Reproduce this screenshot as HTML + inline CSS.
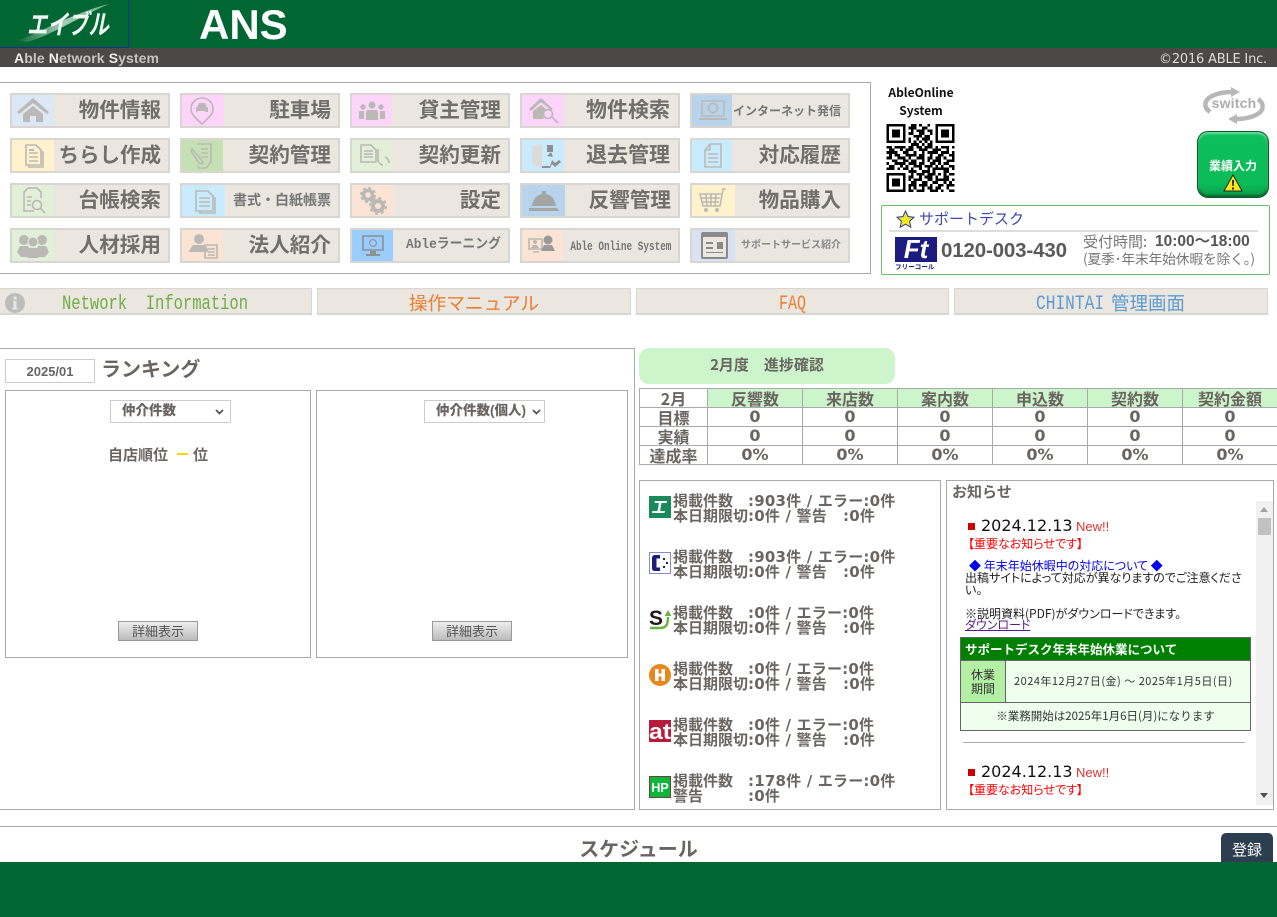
<!DOCTYPE html>
<html lang="ja"><head><meta charset="utf-8"><title>ANS</title>
<style>
html,body{margin:0;padding:0;background:#fff}
body{position:relative;width:1277px;height:917px;overflow:hidden;font-family:"Liberation Sans","Noto Sans CJK JP",sans-serif;color:#6b6562}
div,span,svg,a{position:absolute;white-space:nowrap}
.b{width:160px;height:35px;box-sizing:border-box;background:#ebe6df;border:2px solid #d9d6d1}
.b i{position:absolute;left:0;top:0;bottom:0;display:block}
.b span{right:7px;top:1px;line-height:30px;font-size:20.6px;font-weight:700;color:#716e6b}
.b span.sm{font-size:14px;color:#777;top:0}
.b span.xs{font-size:10px;color:#888}
.b svg{left:5px;top:3px;fill:#bbb9b5;stroke:none}
.s{fill:none;stroke:#bbb9b5;stroke-width:1.6}
.n{top:288px;height:27px;box-sizing:border-box;background:#ebe6df;border:1px solid #d9d6d1;border-bottom:2px solid #d9d6d1;text-align:center;line-height:29px;font-size:18.7px}
.c{font-family:"Liberation Mono",monospace;font-size:20px;line-height:30px;top:290px}
.box{box-sizing:border-box;border:1px solid #aaa;background:#fff}
.sel{box-sizing:border-box;width:121px;height:23px;border:1px solid #ccc;background:#fff;top:9px;font-size:13.5px;font-weight:700;line-height:20px;color:#6b6562}
.sel b{position:absolute;left:11px}
.sel svg{right:6px;top:8px}
.btn{box-sizing:border-box;width:80px;height:20px;top:230px;border:1px solid #999;background:linear-gradient(#eee,#bbb);text-align:center;font-size:13px;line-height:19px;color:#555}
table{position:absolute;left:639px;top:388px;border-collapse:collapse;table-layout:fixed;width:638px}
td,th{border:1px solid #aaa;height:18px;padding:0;text-align:center;font:700 16px/18px "DejaVu Sans","Noto Sans CJK JP",sans-serif;color:#6b6562;box-sizing:border-box}
th{background:#ccf5cc;font-size:16px;font-family:"Noto Sans CJK JP",sans-serif}
.l{font-size:16px;font-family:"Noto Sans CJK JP",sans-serif}
.p{font:700 15px/15px "DejaVu Sans","Noto Sans CJK JP",sans-serif;color:#6b6562}
.p span{top:0}
.p span+span{letter-spacing:.2px}
.nw{font:12px/14px "Noto Sans CJK JP",sans-serif;color:#222;font-feature-settings:"palt"}
.dt{font:16px/18px "DejaVu Sans",sans-serif;color:#111}
.red{color:#e00;font:12px/14px "Liberation Sans","Noto Sans CJK JP",sans-serif;font-feature-settings:"palt"}
</style></head><body>

<!-- header -->
<div style="left:0;top:0;width:1277px;height:48px;background:#006633"></div>
<div style="left:128px;top:0;width:1px;height:48px;background:#1c2f8a"></div>
<div style="left:0;top:47px;width:128px;height:1px;background:#1c2f8a"></div>
<svg style="left:15px;top:2px" width="100" height="42" viewBox="0 0 100 42">
<defs><linearGradient id="g1" x1="0" x2="1"><stop offset="0" stop-color="#006633"/><stop offset=".5" stop-color="#cfe6d8"/><stop offset="1" stop-color="#8fc4a5"/></linearGradient></defs>
<path d="M1 39C20 33 60 10 94 2 70 12 35 34 12 40z" fill="url(#g1)" opacity=".8"/>
<text x="12" y="32" font-family="Noto Sans CJK JP" font-weight="700" font-style="italic" font-size="27" fill="#f2f7f3" textLength="82" lengthAdjust="spacingAndGlyphs">エイブル</text>
</svg>
<div style="left:199px;top:1px;font:700 42px/48px 'Liberation Sans',sans-serif;color:#fff">ANS</div>
<div style="left:0;top:48px;width:1277px;height:19px;background:#4b4946"></div>
<div style="left:14px;top:50px;font:700 14px/16px 'Liberation Sans',sans-serif;color:#c4c4c4;letter-spacing:.1px"><b style="color:#eee">A</b>ble <b style="color:#eee">N</b>etwork <b style="color:#eee">S</b>ystem</div>
<div style="right:10px;top:52px;font:13px/16px 'DejaVu Sans',sans-serif;color:#ddd;letter-spacing:-.2px">©2016 ABLE Inc.</div>

<!-- menu frame -->
<div class="box" style="left:-1px;top:82px;width:872px;height:192px"></div>

<!-- row 1 -->
<div class="b" style="left:10px;top:93px"><i style="width:42px;background:#dce8f5"></i><svg width="32" height="25" viewBox="0 0 32 25" style="left:5px;top:3px"><path d="M16 0L0 14l2 2L16 5l14 11 2-2zM6 16L16 8l10 8v8h-7v-6h-6v6H6z"/></svg><span>物件情報</span></div>
<div class="b" style="left:180px;top:93px"><i style="width:42px;background:#fdd5fb"></i><svg width="30" height="28" viewBox="0 0 30 28" style="left:7px;top:2px"><path class="s" d="M13 1a11 11 0 0 0-11 11c0 6 6 10 11 15 5-5 11-9 11-15A11 11 0 0 0 13 1z"/><path d="M8 10l2-4h6l2 4 1 1v4h-3v-1h-8v1H7v-4z"/></svg><span>駐車場</span></div>
<div class="b" style="left:350px;top:93px"><i style="width:40px;background:#fdd5fb"></i><svg width="28" height="20" viewBox="0 0 28 20" style="left:6px;top:6px"><circle cx="14" cy="4" r="3.5"/><circle cx="5" cy="6" r="2.7"/><circle cx="23" cy="6" r="2.7"/><path d="M9 9h10l1 3v7H8v-7zM1 10h5v8H1zM22 10h5v8h-5z"/></svg><span>貸主管理</span></div>
<div class="b" style="left:520px;top:93px"><i style="width:42px;background:#fdd5fb"></i><svg width="32" height="28" viewBox="0 0 32 28" style="left:7px;top:2px"><path d="M12 1L0 12l2 2L12 5l10 8 2-1zM4 14l8-6 6 5a7 7 0 0 0-3 9H4z"/><circle class="s" cx="19" cy="17" r="4.5" stroke-width="2"/><path class="s" stroke-width="2.4" d="M23 20l6 6"/></svg><span style="right:8px;font-size:21px">物件検索</span></div>
<div class="b" style="left:690px;top:93px"><i style="width:40px;background:#b8d3ec"></i><svg width="32" height="24" viewBox="0 0 32 24" style="left:6px;top:4px"><path class="s" d="M4 2h22v15H4z"/><circle class="s" cx="15" cy="9" r="4.5"/><path d="M1 19h28v2H1z"/></svg><span class="xs" style="right:7px;font-size:12px;color:#777;font-weight:700">インターネット発信</span></div>

<!-- row 2 -->
<div class="b" style="left:10px;top:138px"><i style="width:42px;background:#fff2cc"></i><svg width="24" height="26" viewBox="0 0 24 26" style="left:9px;top:3px"><path class="s" d="M5 2h10l5 5v15H5zM20 9h2v15H8v-2M8 10h9M8 14h9M8 18h9"/><path d="M8 6h5v2H8z"/></svg><span style="font-size:20.5px">ちらし作成</span></div>
<div class="b" style="left:180px;top:138px"><i style="width:41px;background:#c5e0b3"></i><svg width="26" height="26" viewBox="0 0 26 26" style="left:8px;top:3px"><path class="s" d="M7 1h14v18l-5 6H9l-2-2M11 6h7M11 10h7M11 14h7M2 6l11 13-1 2-3-1L1 8z"/></svg><span>契約管理</span></div>
<div class="b" style="left:350px;top:138px"><i style="width:40px;background:#e2efd9"></i><svg width="34" height="26" viewBox="0 0 34 26" style="left:7px;top:3px"><path class="s" d="M2 2h10l5 5v12H2zM5 8h9M5 11h9M5 14h9M19 6v12M24 22a6 6 0 0 1-5-5M26 14a6 6 0 0 1 4 6"/></svg><span>契約更新</span></div>
<div class="b" style="left:520px;top:138px"><i style="width:42px;background:#c9ebff"></i><svg width="30" height="28" viewBox="0 0 30 28" style="left:9px;top:2px"><path d="M1 4l10-2v24L1 22z" fill="#dcdbd8"/><path d="M16 3h6v7h-6zM11 26v-2h8l2-6 3 3 4-3 2 2-6 5-3-3-2 4zM20 10l2 5-6-1z" fill="#8f8f8f"/></svg><span style="right:8px;font-size:21px">退去管理</span></div>
<div class="b" style="left:690px;top:138px"><i style="width:40px;background:#c9ebff"></i><svg width="24" height="26" viewBox="0 0 24 26" style="left:10px;top:3px"><path class="s" d="M8 1h11v23H3V7zM3 7h5V1M6 11h10M6 15h10M6 19h10"/></svg><span>対応履歴</span></div>

<!-- row 3 -->
<div class="b" style="left:10px;top:183px"><i style="width:42px;background:#e2efd9"></i><svg width="26" height="28" viewBox="0 0 26 28" style="left:10px;top:2px"><path class="s" d="M6 1h9l4 4v6M6 1L2 5v19h10M5 10h5M5 14h4M5 18h4"/><circle class="s" cx="15" cy="18" r="4.5"/><path class="s" stroke-width="2.2" d="M18 21l5 5"/></svg><span>台帳検索</span></div>
<div class="b" style="left:180px;top:183px"><i style="width:43px;background:#c9ebff"></i><svg width="26" height="26" viewBox="0 0 26 26" style="left:11px;top:4px"><path class="s" d="M3 2h12l5 5v15H3zM20 9h2v15H7v-2M6 9h11M6 13h11M6 17h11"/></svg><span class="sm">書式・白紙帳票</span></div>
<div class="b" style="left:350px;top:183px"><i style="width:41px;background:#fbe4d5"></i><svg width="28" height="28" viewBox="0 0 28 28" style="left:7px;top:2px"><circle cx="9" cy="8" r="4.5" fill="none" stroke="#bbb9b5" stroke-width="3.5"/><circle cx="9" cy="8" r="7" fill="none" stroke="#bbb9b5" stroke-width="2" stroke-dasharray="3 2.5"/><circle cx="19" cy="19" r="5" fill="none" stroke="#bbb9b5" stroke-width="4"/><circle cx="19" cy="19" r="8" fill="none" stroke="#bbb9b5" stroke-width="2" stroke-dasharray="3 3.3"/></svg><span>設定</span></div>
<div class="b" style="left:520px;top:183px"><i style="width:43px;background:#b8d3ec"></i><svg width="30" height="22" viewBox="0 0 30 22" style="left:7px;top:6px"><path d="M13 0h4v3h-4zM15 3c7 0 11 5 12 12H3C4 8 8 3 15 3zM0 17h28l2 3H0z" fill="#a5a5a3"/></svg><span>反響管理</span></div>
<div class="b" style="left:690px;top:183px"><i style="width:43px;background:#fff2cc"></i><svg width="30" height="26" viewBox="0 0 30 26" style="left:6px;top:3px"><path class="s" d="M28 1h-3l-3 17H5L2 6h21M3 10h19M4 14h17M8 6l1 12M13 6v12M18 6l-1 12"/><circle cx="8" cy="22" r="2"/><circle cx="19" cy="22" r="2"/></svg><span>物品購入</span></div>

<!-- row 4 -->
<div class="b" style="left:10px;top:228px"><i style="width:42px;background:#e2efd9"></i><svg width="32" height="24" viewBox="0 0 32 24" style="left:5px;top:4px"><circle cx="7" cy="6" r="5"/><circle cx="25" cy="6" r="5"/><path d="M0 18l3-6h8l3 6-4 5H4zM18 18l3-6h8l3 6-4 5h-6z"/><circle cx="16" cy="8" r="5" stroke="#e2efd9"/><path d="M8 21l3-7h10l3 7-3 3H11z"/></svg><span>人材採用</span></div>
<div class="b" style="left:180px;top:228px"><i style="width:41px;background:#fbe4d5"></i><svg width="30" height="26" viewBox="0 0 30 26" style="left:6px;top:3px"><circle cx="11" cy="6" r="5"/><path d="M1 18l4-6h12l3 4v3H1z"/><path class="s" d="M17 12h12v13H17zM20 16h7M20 19h7M20 22h7"/></svg><span>法人紹介</span></div>
<div class="b" style="left:350px;top:228px"><i style="width:41px;background:#9cf"></i><svg width="26" height="24" viewBox="0 0 26 24" style="left:8px;top:5px"><path fill="none" stroke="#8f8f8f" stroke-width="1.6" d="M3 1h20v14H3z"/><circle cx="13" cy="8" r="3.4" fill="none" stroke="#8f8f8f"/><path d="M10 16h6v3h4v2H6v-2h4z" fill="#8f8f8f"/></svg><span class="sm" style="font-family:'Liberation Mono','Noto Sans CJK JP',monospace;font-size:13.5px;right:7px;top:1px;transform:scaleX(.95);transform-origin:right">Ableラーニング</span></div>
<div class="b" style="left:520px;top:228px"><i style="width:41px;background:#fbe4d5"></i><svg width="30" height="24" viewBox="0 0 30 24" style="left:5px;top:4px"><path class="s" d="M2 5h13v10H2zM6 18h6"/><circle cx="8" cy="8" r="2"/><path d="M4 14l2-3h4l2 3z"/><circle cx="21" cy="6" r="4.5" fill="#999"/><path d="M14 17l3-6h8l3 6zM14 9h2M26 9h2" fill="#999"/></svg><span class="sm" style="font-family:'Liberation Mono',monospace;font-size:13px;right:7px;top:2px;transform:scaleX(.72);transform-origin:right;font-weight:700">Able Online System</span></div>
<div class="b" style="left:690px;top:228px"><i style="width:43px;background:#d9e2f3"></i><svg width="30" height="28" viewBox="0 0 30 28" style="left:8px;top:1px"><path d="M3 1h23a2 2 0 0 1 2 2v23a2 2 0 0 1-2 2H3a2 2 0 0 1-2-2V3a2 2 0 0 1 2-2z" fill="#8a8a8a"/><path d="M3 6h23v20H3z" fill="#ebe6df"/><path d="M6 11h7v2H6zM6 16h7v2H6zM17 11h6v7h-6zM6 21h17v1H6z" fill="#8a8a8a"/></svg><span class="xs">サポートサービス紹介</span></div>

<!-- QR -->
<div style="left:871px;width:100px;top:84px;text-align:center;color:#111;font:700 12px/18px 'Noto Sans CJK JP',sans-serif;white-space:normal">AbleOnline<br>System</div>
<svg style="left:886px;top:124px" width="69" height="68" viewBox="0 0 25 25" shape-rendering="crispEdges"><path fill="none" stroke="#000" d="M0 .5h7M9 .5h2M12 .5h1M15 .5h1M18 .5h7M0 1.500h1M6 1.500h1M8 1.500h3M13 1.500h2M18 1.500h1M24 1.500h1M0 2.500h1M2 2.500h3M6 2.500h1M9 2.500h1M11 2.500h3M15 2.500h2M18 2.500h1M20 2.500h3M24 2.500h1M0 3.500h1M2 3.500h3M6 3.500h1M8 3.500h2M12 3.500h2M16 3.500h1M18 3.500h1M20 3.500h3M24 3.500h1M0 4.500h1M2 4.500h3M6 4.500h1M10 4.500h3M14 4.500h2M18 4.500h1M20 4.500h3M24 4.500h1M0 5.500h1M6 5.500h1M8 5.500h1M11 5.500h1M13 5.500h3M18 5.500h1M24 5.500h1M0 6.500h7M8 6.500h1M10 6.500h1M12 6.500h1M14 6.500h1M16 6.500h1M18 6.500h7M9 7.500h3M13 7.500h1M15 7.500h2M0 8.500h2M3 8.500h4M8 8.500h2M11 8.500h2M14 8.500h3M18 8.500h1M20 8.500h3M24 8.500h1M1 9.500h2M5 9.500h1M7 9.500h3M12 9.500h3M17 9.500h3M22 9.500h1M0 10.500h4M6 10.500h2M10 10.500h1M13 10.500h1M15 10.500h4M20 10.500h3M24 10.500h1M1 11.500h1M3 11.500h2M7 11.500h4M12 11.500h2M16 11.500h1M19 11.500h2M23 11.500h2M0 12.500h2M4 12.500h3M8 12.500h1M11 12.500h3M15 12.500h2M18 12.500h2M21 12.500h1M24 12.500h1M2 13.500h2M6 13.500h2M9 13.500h2M13 13.500h1M15 13.500h1M17 13.500h3M22 13.500h3M0 14.500h1M3 14.500h4M8 14.500h3M12 14.500h2M16 14.500h2M19 14.500h1M21 14.500h2M1 15.500h2M5 15.500h1M7 15.500h1M10 15.500h3M14 15.500h3M18 15.500h1M20 15.500h1M23 15.500h2M0 16.500h3M4 16.500h1M6 16.500h2M9 16.500h1M12 16.500h1M15 16.500h1M17 16.500h6M24 16.500h1M8 17.500h3M13 17.500h3M17 17.500h1M21 17.500h2M0 18.500h7M9 18.500h1M11 18.500h3M15 18.500h3M19 18.500h1M21 18.500h1M23 18.500h2M0 19.500h1M6 19.500h1M8 19.500h2M12 19.500h1M14 19.500h3M18 19.500h1M21 19.500h2M0 20.500h1M2 20.500h3M6 20.500h1M8 20.500h1M10 20.500h3M15 20.500h2M18 20.500h5M24 20.500h1M0 21.500h1M2 21.500h3M6 21.500h1M9 21.500h2M13 21.500h2M17 21.500h2M21 21.500h1M23 21.500h1M0 22.500h1M2 22.500h3M6 22.500h1M8 22.500h3M12 22.500h3M16 22.500h1M19 22.500h2M22 22.500h3M0 23.500h1M6 23.500h1M8 23.500h1M10 23.500h1M13 23.500h1M15 23.500h2M18 23.500h2M22 23.500h1M0 24.500h7M8 24.500h2M11 24.500h3M16 24.500h3M20 24.500h1M23 24.500h2"/></svg>

<!-- switch -->
<svg style="left:1202px;top:87px" width="64" height="37" viewBox="0 0 64 37"><path d="M8 25C1 20 2 13 10 9 16 6 24 5 30 5" fill="none" stroke="#b7b7b7" stroke-width="4.500"/><path d="M29 0l9 5-9 5zM35 27l-9 5 9 5z" fill="#b7b7b7"/><path d="M56 12c7 5 6 12-2 16-6 3-14 4-20 4" fill="none" stroke="#b7b7b7" stroke-width="4.500"/><text x="32" y="21" text-anchor="middle" font-family="Liberation Sans" font-weight="700" font-size="14" fill="#adadad" letter-spacing=".2">switch</text></svg>

<!-- green button -->
<div style="left:1197px;top:131px;width:72px;height:67px;box-sizing:border-box;border-radius:11px;background:linear-gradient(#0cc05c 0,#0bbb58 80%,#0a9c49 100%);border:1px solid #0a5c2c;box-shadow:inset 0 2px 2px #6fdc9c,inset 0 -2px 2px #06622c"></div>
<div style="left:1197px;width:72px;top:158px;text-align:center;font:700 12px/16px 'Noto Sans CJK JP',sans-serif;color:#fff">業績入力</div>
<svg style="left:1223px;top:174px" width="20" height="18" viewBox="0 0 20 18"><path d="M10 1l9 16H1z" fill="#ffe91a" stroke="#222"/><path d="M9 6h2l-.3 6h-1.400zM9 13.500h2v2H9z" fill="#222"/></svg>

<!-- support -->
<div style="left:881px;top:205px;width:389px;height:70px;box-sizing:border-box;border:1px solid #6dbb73;border-radius:2px;background:#fff"></div>
<svg style="left:896px;top:210px" width="19" height="18" viewBox="0 0 19 18"><path d="M9.500 1l2.500 5.500 6 .7-4.400 4 1.200 6-5.300-3-5.300 3 1.200-6L1 7.200l6-.7z" fill="#f2e925" stroke="#2b3a9c"/></svg>
<div style="left:919px;top:208px;font:15px/22px 'Noto Sans CJK JP',sans-serif;color:#3a4ab0">サポートデスク</div>
<div style="left:889px;top:230px;width:369px;height:2px;background:#ddd"></div>
<div style="left:895px;top:237px;width:42px;height:25px;background:#1c1c80;color:#fff;font:italic 700 26px/25px 'Liberation Sans',sans-serif;text-align:center">Ft</div>
<div style="left:895px;top:262px;font:700 6.5px/9px 'Noto Sans CJK JP',sans-serif;color:#1c1c80;letter-spacing:.1px">フリーコール</div>
<div style="left:941px;top:237px;font:700 20.500px/28px 'Liberation Sans',sans-serif;color:#5a5a5a;letter-spacing:-.15px">0120-003-430</div>
<div style="left:1083px;top:233px;font:15px/18px 'Noto Sans CJK JP',sans-serif;color:#777">受付時間:</div>
<div style="left:1155px;top:233px;font:700 15.500px/18px 'Liberation Sans','Noto Sans CJK JP',sans-serif;color:#555">10:00〜18:00</div>
<div style="left:1083px;top:249px;font:13.800px/18px 'Noto Sans CJK JP',sans-serif;color:#777;letter-spacing:-.2px">(夏季･年末年始休暇を除く。)</div>

<!-- nav -->
<div class="n" style="left:-1px;width:313px"></div>
<div class="c" style="left:62px;color:#70ad47;white-space:pre;transform:scaleX(.775);transform-origin:left">Network  Information</div>
<svg style="left:5px;top:293px" width="20" height="20" viewBox="0 0 20 20"><circle cx="10" cy="10" r="10" fill="#bdbdbd"/><path d="M8.500 3.500h3v3h-3zM8 8h3.500v7h1.500v1.500H7V15h1.500V9.500H8z" fill="#ebe6df"/></svg>
<div class="n" style="left:317px;width:314px;color:#ed7d31">操作マニュアル</div>
<div class="n" style="left:636px;width:313px"></div>
<div class="c" style="left:779px;color:#ed7d31;transform:scaleX(.75);transform-origin:left">FAQ</div>
<div class="n" style="left:954px;width:314px"></div>
<div class="c" style="left:1036px;color:#5b9bd5;transform:scaleX(.81);transform-origin:left">CHINTAI</div>
<div style="left:1111px;top:288px;font:18.500px/30px 'Noto Sans CJK JP',sans-serif;color:#5b9bd5">管理画面</div>

<!-- ranking -->
<div class="box" style="left:-1px;top:348px;width:636px;height:462px"></div>
<div class="box" style="left:5px;top:359px;width:90px;height:24px;border-color:#ccc;text-align:center;font:700 13px/23px 'Liberation Sans',sans-serif;color:#666">2025/01</div>
<div style="left:101px;top:354px;font:700 20px/28px 'Noto Sans CJK JP',sans-serif;color:#6b6562">ランキング</div>

<div class="box" style="left:5px;top:390px;width:306px;height:268px">
 <div class="sel" style="left:104px"><b>仲介件数</b><svg width="9" height="6" viewBox="0 0 9 6"><path d="M1 1l3.500 3.500L8 1" fill="none" stroke="#555" stroke-width="1.800"/></svg></div>
 <div style="left:102px;top:54px;font:700 15px/20px 'Noto Sans CJK JP',sans-serif;color:#6b6562">自店順位</div>
 <div style="left:171px;top:62px;width:11px;height:2px;background:#ffd500"></div>
 <div style="left:187px;top:54px;font:700 15px/20px 'Noto Sans CJK JP',sans-serif;color:#6b6562">位</div>
 <div class="btn" style="left:112px">詳細表示</div>
</div>
<div class="box" style="left:316px;top:390px;width:312px;height:268px">
 <div class="sel" style="left:107px"><b>仲介件数(個人)</b><svg width="9" height="6" viewBox="0 0 9 6" style="right:3px"><path d="M1 1l3.500 3.500L8 1" fill="none" stroke="#555" stroke-width="1.800"/></svg></div>
 <div class="btn" style="left:115px">詳細表示</div>
</div>

<!-- progress -->
<div style="left:639px;top:348px;width:256px;height:36px;background:#ccf5cc;border-radius:10px;text-align:center;font:700 15px/34px 'Noto Sans CJK JP',sans-serif;color:#6b6562;white-space:pre">2月度　進捗確認</div>
<table>
<colgroup><col style="width:68px"><col style="width:95px"><col style="width:95px"><col style="width:95px"><col style="width:95px"><col style="width:95px"><col style="width:95px"></colgroup>
<tr style="height:19px"><td class="l" style="font-family:'Noto Sans CJK JP',sans-serif">2月</td><th>反響数</th><th>来店数</th><th>案内数</th><th>申込数</th><th>契約数</th><th>契約金額</th></tr>
<tr style="height:19px"><td class="l">目標</td><td>0</td><td>0</td><td>0</td><td>0</td><td>0</td><td>0</td></tr>
<tr style="height:19px"><td class="l">実績</td><td>0</td><td>0</td><td>0</td><td>0</td><td>0</td><td>0</td></tr>
<tr style="height:19px"><td class="l">達成率</td><td>0%</td><td>0%</td><td>0%</td><td>0%</td><td>0%</td><td>0%</td></tr>
</table>

<!-- portals -->
<div class="box" style="left:639px;top:480px;width:302px;height:330px"></div>

<svg style="left:649px;top:496px" width="22" height="22" viewBox="0 0 22 22"><path d="M0 0h22v22H0z" fill="#1b8a5a"/><path d="M6 5h12l-.5 2h-5l-1.500 8h5l-.5 2H3l.5-2h5L10 7H5.500z" fill="#fff"/></svg>
<div class="p" style="left:673px;top:494px"><span style="left:0">掲載件数</span><span style="left:75px">:903件 / エラー:0件</span></div>
<div class="p" style="left:673px;top:509px"><span style="left:0">本日期限切</span><span style="left:75px">:0件 / 警告</span><span style="left:170px">:0件</span></div>

<svg style="left:649px;top:552px" width="22" height="22" viewBox="0 0 22 22"><path d="M.5.5h21v21H.5z" fill="#fff" stroke="#8a8acb"/><path d="M3 6q0-3 3-3h5v3.500H7.500v9H11V19H6q-3 0-3-3z" fill="#1c1c80"/><path d="M14 6h2v2h-2zM17 10h2v2h-2zM14 14h2v2h-2z" fill="#1c1c80"/></svg>
<div class="p" style="left:673px;top:550px"><span style="left:0">掲載件数</span><span style="left:75px">:903件 / エラー:0件</span></div>
<div class="p" style="left:673px;top:565px"><span style="left:0">本日期限切</span><span style="left:75px">:0件 / 警告</span><span style="left:170px">:0件</span></div>

<svg style="left:649px;top:608px" width="22" height="22" viewBox="0 0 22 22"><text x="0" y="17" font-family="Liberation Sans" font-weight="700" font-size="21" fill="#231815">S</text><path d="M1 20h10c6 0 8-3 8-11" fill="none" stroke="#6cb33f" stroke-width="2.500"/><path d="M19 2l3.500 6h-7z" fill="#6cb33f"/></svg>
<div class="p" style="left:673px;top:606px"><span style="left:0">掲載件数</span><span style="left:75px">:0件 / エラー:0件</span></div>
<div class="p" style="left:673px;top:621px"><span style="left:0">本日期限切</span><span style="left:75px">:0件 / 警告</span><span style="left:170px">:0件</span></div>

<svg style="left:649px;top:664px" width="22" height="22" viewBox="0 0 22 22"><circle cx="11" cy="11" r="11" fill="#e8871e"/><path d="M6 5h3.500v4.500h3V5H16v12h-3.500v-4.500h-3V17H6z" fill="#fff"/></svg>
<div class="p" style="left:673px;top:662px"><span style="left:0">掲載件数</span><span style="left:75px">:0件 / エラー:0件</span></div>
<div class="p" style="left:673px;top:677px"><span style="left:0">本日期限切</span><span style="left:75px">:0件 / 警告</span><span style="left:170px">:0件</span></div>

<svg style="left:649px;top:720px" width="22" height="22" viewBox="0 0 22 22"><path d="M0 0h22v22H0z" fill="#b81c3c"/><text x="0" y="19" font-family="Liberation Sans" font-weight="700" font-size="22" fill="#fff" textLength="22" lengthAdjust="spacingAndGlyphs">at</text></svg>
<div class="p" style="left:673px;top:718px"><span style="left:0">掲載件数</span><span style="left:75px">:0件 / エラー:0件</span></div>
<div class="p" style="left:673px;top:733px"><span style="left:0">本日期限切</span><span style="left:75px">:0件 / 警告</span><span style="left:170px">:0件</span></div>

<svg style="left:649px;top:776px" width="22" height="22" viewBox="0 0 22 22"><path d="M.5.5h21v21H.5z" fill="#0cb83c" stroke="#7a3a3a"/><text x="11" y="16" text-anchor="middle" font-family="Liberation Sans" font-weight="700" font-size="12.500" fill="#fff">HP</text></svg>
<div class="p" style="left:673px;top:774px"><span style="left:0">掲載件数</span><span style="left:75px">:178件 / エラー:0件</span></div>
<div class="p" style="left:673px;top:789px"><span style="left:0">警告</span><span style="left:75px">:0件</span></div>

<!-- news -->
<div class="box" style="left:946px;top:480px;width:328px;height:330px"></div>
<div style="left:952px;top:482px;font:700 15px/20px 'Noto Sans CJK JP',sans-serif;color:#6b6562">お知らせ</div>
<div style="left:1256px;top:501px;width:17px;height:304px;background:#f1f1f1"></div>
<div style="left:1258px;top:518px;width:13px;height:17px;background:#c1c1c1"></div>
<svg style="left:1260px;top:507px" width="8" height="5"><path d="M4 0l4 5H0z" fill="#a3a3a3"/></svg>
<svg style="left:1260px;top:793px" width="8" height="5"><path d="M0 0h8L4 5z" fill="#505050"/></svg>

<div style="left:968px;top:523px;width:7px;height:7px;background:#c00"></div>
<div class="dt" style="left:981px;top:517px">2024.12.13</div>
<div class="red" style="left:1076px;top:520px;color:#d33;font-size:13px">New!!</div>
<div class="red" style="left:968px;top:537px;color:#f00">【重要なお知らせです】</div>
<div class="nw" style="left:969px;top:559px;color:#00e">◆ 年末年始休暇中の対応について ◆</div>
<div class="nw" style="left:965px;top:571px">出稿サイトによって対応が異なりますのでご注意くださ</div>
<div class="nw" style="left:965px;top:583px">い。</div>
<div class="nw" style="left:965px;top:607px">※説明資料(PDF)がダウンロードできます。</div>
<div class="nw" style="left:965px;top:618px;color:#551a8b;text-decoration:underline">ダウンロード</div>

<div style="left:960px;top:637px;width:291px;height:94px;box-sizing:border-box;border:1px solid #666;background:#efe"></div>
<div style="left:961px;top:638px;width:289px;height:22px;background:#008000;color:#fff;font:700 12.500px/22px 'Noto Sans CJK JP',sans-serif"><span style="left:4px;top:0">サポートデスク年末年始休業について</span></div>
<div style="left:961px;top:660px;width:289px;height:1px;background:#666"></div>
<div style="left:961px;top:702px;width:289px;height:1px;background:#666"></div>
<div style="left:961px;top:661px;width:44px;height:41px;background:#b3f0a3;border-right:1px solid #666;text-align:center;font:12px/14px 'Noto Sans CJK JP',sans-serif;color:#333;white-space:normal"><span style="left:0;width:44px;top:7px">休業<br>期間</span></div>
<div style="left:1014px;top:674px;font:11px/14px 'Noto Sans CJK JP',sans-serif;color:#333;letter-spacing:.5px">2024年12月27日(金) 〜 2025年1月5日(日)</div>
<div style="left:961px;width:289px;top:709px;text-align:center;font:11.500px/14px 'Noto Sans CJK JP',sans-serif;color:#333">※業務開始は2025年1月6日(月)になります</div>
<div style="left:963px;top:742px;width:282px;height:1px;background:#aaa"></div>

<div style="left:968px;top:769px;width:7px;height:7px;background:#c00"></div>
<div class="dt" style="left:981px;top:763px">2024.12.13</div>
<div class="red" style="left:1076px;top:766px;color:#d33;font-size:13px">New!!</div>
<div class="red" style="left:968px;top:783px;color:#f00">【重要なお知らせです】</div>

<!-- schedule -->
<div style="left:0;top:826px;width:1277px;height:1px;background:#aaa"></div>
<div style="left:0;width:1277px;top:833px;text-align:center;font:700 20px/30px 'Noto Sans CJK JP',sans-serif;color:#6b6562">スケジュール</div>
<div style="left:1221px;top:833px;width:52px;height:40px;background:#2c3e50;border-radius:5px 5px 0 0;color:#fff;font:15px/33px 'Noto Sans CJK JP',sans-serif;text-align:center">登録</div>
<div style="left:0;top:862px;width:1277px;height:55px;background:#006633"></div>
</body></html>
